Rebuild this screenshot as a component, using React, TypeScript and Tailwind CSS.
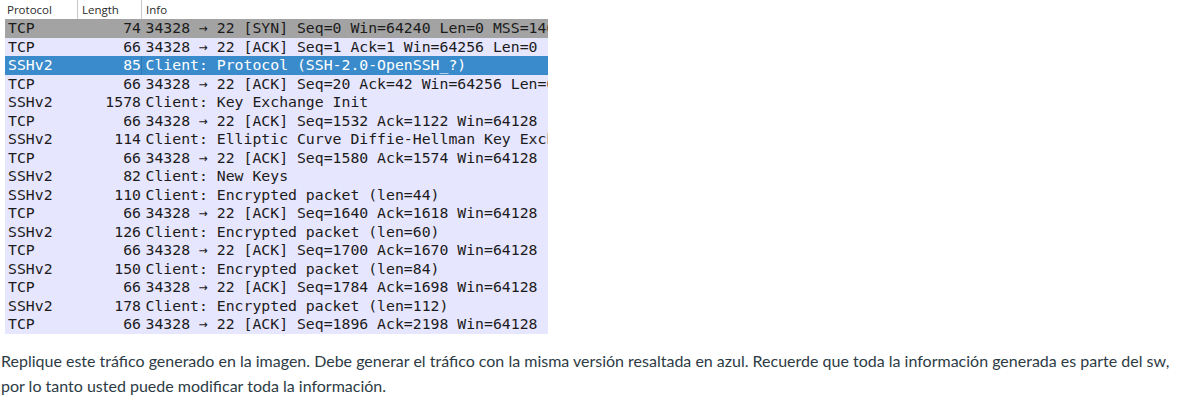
import React from "react";

type Row = { p: string; l: string; i: string; kind: "gray" | "sel" | "tcp" };

const rows: Row[] = [
  { p: "TCP", l: "74", i: "34328 → 22 [SYN] Seq=0 Win=64240 Len=0 MSS=1460", kind: "gray" },
  { p: "TCP", l: "66", i: "34328 → 22 [ACK] Seq=1 Ack=1 Win=64256 Len=0", kind: "tcp" },
  { p: "SSHv2", l: "85", i: "Client: Protocol (SSH-2.0-OpenSSH_?)", kind: "sel" },
  { p: "TCP", l: "66", i: "34328 → 22 [ACK] Seq=20 Ack=42 Win=64256 Len=0", kind: "tcp" },
  { p: "SSHv2", l: "1578", i: "Client: Key Exchange Init", kind: "tcp" },
  { p: "TCP", l: "66", i: "34328 → 22 [ACK] Seq=1532 Ack=1122 Win=64128", kind: "tcp" },
  { p: "SSHv2", l: "114", i: "Client: Elliptic Curve Diffie-Hellman Key Exchange", kind: "tcp" },
  { p: "TCP", l: "66", i: "34328 → 22 [ACK] Seq=1580 Ack=1574 Win=64128", kind: "tcp" },
  { p: "SSHv2", l: "82", i: "Client: New Keys", kind: "tcp" },
  { p: "SSHv2", l: "110", i: "Client: Encrypted packet (len=44)", kind: "tcp" },
  { p: "TCP", l: "66", i: "34328 → 22 [ACK] Seq=1640 Ack=1618 Win=64128", kind: "tcp" },
  { p: "SSHv2", l: "126", i: "Client: Encrypted packet (len=60)", kind: "tcp" },
  { p: "TCP", l: "66", i: "34328 → 22 [ACK] Seq=1700 Ack=1670 Win=64128", kind: "tcp" },
  { p: "SSHv2", l: "150", i: "Client: Encrypted packet (len=84)", kind: "tcp" },
  { p: "TCP", l: "66", i: "34328 → 22 [ACK] Seq=1784 Ack=1698 Win=64128", kind: "tcp" },
  { p: "SSHv2", l: "178", i: "Client: Encrypted packet (len=112)", kind: "tcp" },
  { p: "TCP", l: "66", i: "34328 → 22 [ACK] Seq=1896 Ack=2198 Win=64128", kind: "tcp" },
];

export default function App() {
  return (
    <div className="w-[1179px] h-[403px] bg-white overflow-hidden">
      <div className="ml-[5px] w-[543px] overflow-hidden">
        <div className="flex h-[19px] items-center bg-white text-[11.5px] text-[#2b2b2b] font-['Open_Sans',sans-serif]">
          <div className="w-[73px] pl-[2px] border-r border-[#c8c8c8] h-full flex items-center">Protocol</div>
          <div className="w-[64px] pl-[4px] border-r border-[#c8c8c8] h-full flex items-center">Length</div>
          <div className="flex-1 pl-[4px]">Info</div>
        </div>
        {rows.map((r, idx) => {
          const bg =
            r.kind === "gray"
              ? "bg-[#a3a3a3] text-[#1b1b1b]"
              : r.kind === "sel"
              ? "bg-[#3a8bcb] text-white"
              : "bg-[#e7e6ff] text-[#1b1b1b]";
          return (
            <div
              key={idx}
              className={`flex h-[18.5px] items-center whitespace-nowrap font-['DejaVu_Sans_Mono',monospace] text-[14.8px] leading-[18px] ${bg}`}
            >
              <div className="w-[73px] pl-[3px] shrink-0">{r.p}</div>
              <div className="w-[63px] text-right shrink-0">{r.l}</div>
              <div
                className={`h-full flex items-center pl-[3.5px] shrink-0 ${
                  r.kind === "sel" ? "border-l border-[#2f7ab5]" : "border-l border-transparent"
                }`}
              >
                {r.i}
              </div>
            </div>
          );
        })}
      </div>
      <p className="mt-[14px] pl-[1px] text-[16px] leading-[25px] text-[#2d3b45] font-['Lato',sans-serif]">
        Replique este tráfico generado en la imagen. Debe generar el tráfico con la misma versión resaltada en azul. Recuerde que toda la información generada es parte del sw,
        <br />
        por lo tanto usted puede modificar toda la información.
      </p>
    </div>
  );
}
